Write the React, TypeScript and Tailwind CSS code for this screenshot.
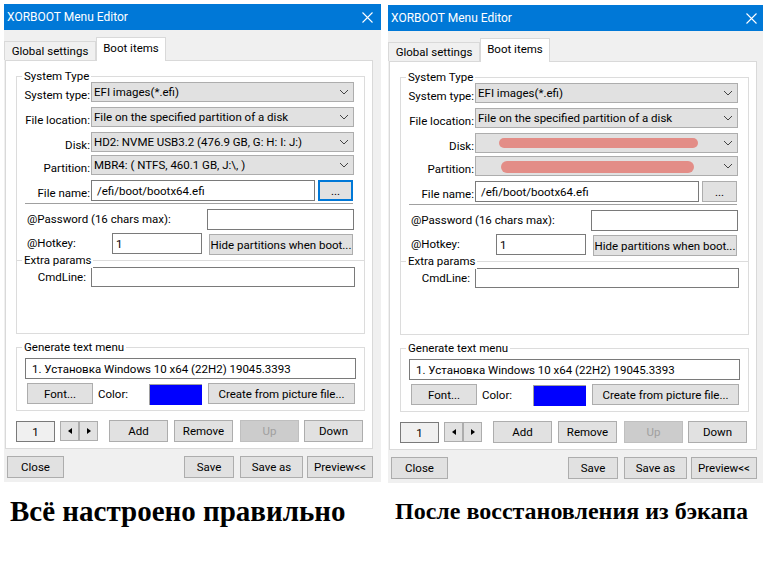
import { FC, ReactNode } from "react";

const ui = "font-['Roboto',sans-serif] text-[11.5px] leading-[16px] text-black whitespace-nowrap";

const Chevron: FC = () => (
  <svg width="10" height="6" viewBox="0 0 10 6" className="shrink-0">
    <polyline points="1,1 5,5 9,1" fill="none" stroke="#444" strokeWidth="1" />
  </svg>
);

const Btn: FC<{ w: string; h?: string; children: ReactNode; className?: string; disabled?: boolean }> = ({
  w,
  h = "h-[21px]",
  children,
  className = "",
  disabled,
}) => (
  <div
    className={`${w} ${h} ${className} flex shrink-0 items-center justify-center border ${
      disabled ? "border-[#bfbfbf] bg-[#cccccc] text-[#a0a0a0]" : "border-[#adadad] bg-[#e1e1e1]"
    }`}
  >
    {children}
  </div>
);

const Combo: FC<{ value?: string; pill?: string }> = ({ value, pill }) => (
  <div className="flex h-[20px] w-[263px] items-center border border-[#adadad] bg-[#e1e1e1] pl-[2px] pr-[4px]">
    <div className="flex-1 truncate">
      {value}
      {pill && <div className={pill} />}
    </div>
    <Chevron />
  </div>
);

const Label: FC<{ children: ReactNode }> = ({ children }) => (
  <div className="-mb-[1px] w-[74px] shrink-0 self-end pr-[1px] text-right">{children}</div>
);

const Group: FC<{ title: string; className: string; children?: ReactNode }> = ({ title, className, children }) => (
  <div className={`relative ml-[10px] w-[349px] border-[#dcdcdc] ${className}`}>
    <span className="absolute -top-[9px] left-[5px] bg-white px-[2px]">{title}</span>
    {children}
  </div>
);

const Window: FC<{ width: string; top: string; left: string; hidden?: boolean; focused?: boolean }> = ({
  width,
  top,
  left,
  hidden,
  focused,
}) => (
  <div className={`${width} ${top} ${left} shrink-0 ${ui}`}>
    <div className="flex h-[26px] items-center bg-[#0078d7] text-[12px] text-white">
      <span className="w-[358px] pl-[3px]">XORBOOT Menu Editor</span>
      <svg width="11" height="11" viewBox="0 0 11 11">
        <path d="M0.5 0.5 L10.5 10.5 M10.5 0.5 L0.5 10.5" stroke="#fff" strokeWidth="1.1" />
      </svg>
    </div>
    <div className="h-[452px] bg-[#f0f0f0] pt-[8px]">
      {/* tabs */}
      <div className="flex h-[22px] items-end">
        <div className="flex h-[19px] w-[92px] items-center justify-center border border-b-0 border-[#d9d9d9] bg-[#f0f0f0]">
          Global settings
        </div>
        <div className="relative z-10 -mb-px flex h-[24px] w-[70px] items-start justify-center border border-b-0 border-[#d9d9d9] bg-white pt-[2px]">
          Boot items
        </div>
      </div>
      {/* panel */}
      <div className="ml-[1px] flex h-[389px] w-[368px] flex-col border border-[#d9d9d9] bg-white">
        <Group title="System Type" className="mt-[15px] h-[184px] border-x border-t">
          <div className="mt-[5px] flex h-[20px]">
            <Label>System type:</Label>
            <Combo value="EFI images(*.efi)" />
          </div>
          <div className="mt-[5px] flex h-[20px]">
            <Label>File location:</Label>
            <Combo value="File on the specified partition of a disk" />
          </div>
          <div className="mt-[5px] flex h-[20px]">
            <Label>Disk:</Label>
            {hidden ? (
              <Combo pill="ml-[21px] h-[10px] w-[199px] rounded-full bg-[#e38d87]" />
            ) : (
              <Combo value="HD2: NVME USB3.2 (476.9 GB, G: H: I: J:)" />
            )}
          </div>
          <div className="mt-[3px] flex h-[20px]">
            <Label>Partition:</Label>
            {hidden ? (
              <Combo pill="ml-[23px] mt-[2px] h-[12px] w-[193px] rounded-full bg-[#e38d87]" />
            ) : (
              <Combo value="MBR4: ( NTFS, 460.1 GB, J:\, )" />
            )}
          </div>
          <div className="mt-[5px] flex h-[20px]">
            <Label>File name:</Label>
            <div className="flex h-[21px] w-[224px] items-center border border-[#7a7a7a] bg-white pl-[5px]">
              /efi/boot/bootx64.efi
            </div>
            <Btn
              w="w-[35px]"
              className={`ml-[3px] ${focused ? "border-2 !border-[#0078d7]" : ""}`}
            >
              ...
            </Btn>
          </div>
          <div className="ml-[8px] mt-[3px] w-[328px] border-t border-[#a0a0a0]" />
          <div className="mt-[5px] flex h-[20px] items-center">
            <span className="ml-[10px] w-[180px]">@Password (16 chars max):</span>
            <div className="h-[21px] w-[147px] border border-[#7a7a7a] bg-white" />
          </div>
          <div className="mt-[4px] flex h-[21px] items-start">
            <span className="ml-[10px] mt-[2px] w-[85px]">@Hotkey:</span>
            <div className="flex h-[21px] w-[90px] items-center border border-[#7a7a7a] bg-white pl-[3px]">1</div>
            <Btn w="w-[144px]" className="ml-[7px] mt-[1px]">
              Hide partitions when boot...
            </Btn>
          </div>
        </Group>
        <Group title="Extra params" className="h-[74px] border">
          <div className="mt-[6px] flex h-[20px]">
            <div className="w-[74px] shrink-0 self-center pr-[5px] text-right">CmdLine:</div>
            <div className="h-[20px] w-[264px] border border-[#7a7a7a] bg-white" />
          </div>
        </Group>
        <Group title="Generate text menu" className="mt-[13px] h-[64px] border">
          <div className="ml-[8px] mt-[10px] flex h-[21px] w-[331px] items-center border border-[#7a7a7a] bg-white pl-[6px]">
            1. Установка Windows 10 x64 (22H2) 19045.3393
          </div>
          <div className="mt-[4px] flex h-[21px] items-start">
            <Btn w="w-[66px]" className="ml-[10px]">
              Font...
            </Btn>
            <span className="ml-[5px] mt-[3px] w-[51px]">Color:</span>
            <div className="mt-[1px] h-[21px] w-[53px] border-l border-t border-[#a0a0a0] bg-[#0000ff]" />
            <Btn w="w-[147px]" className="ml-[6px]">
              Create from picture file...
            </Btn>
          </div>
        </Group>
        <div className="ml-[10px] mt-[10px] flex items-start">
          <div className="flex h-[21px] w-[39px] items-center justify-center border border-[#7a7a7a] bg-[#f0f0f0]">1</div>
          <Btn w="w-[19px]" h="h-[20px]" className="ml-[5px]">
            <svg width="4" height="6" viewBox="0 0 4 6">
              <polygon points="4,0 4,6 0,3" fill="#000" />
            </svg>
          </Btn>
          <Btn w="w-[19px]" h="h-[20px]">
            <svg width="4" height="6" viewBox="0 0 4 6">
              <polygon points="0,0 0,6 4,3" fill="#000" />
            </svg>
          </Btn>
          <Btn w="w-[59px]" h="h-[22px]" className="-mt-px ml-[11px]">
            Add
          </Btn>
          <Btn w="w-[59px]" h="h-[22px]" className="-mt-px ml-[6px]">
            Remove
          </Btn>
          <Btn w="w-[59px]" h="h-[22px]" className="-mt-px ml-[7px]" disabled>
            Up
          </Btn>
          <Btn w="w-[59px]" h="h-[22px]" className="-mt-px ml-[5px]">
            Down
          </Btn>
        </div>
      </div>
      {/* footer */}
      <div className="mt-[7px] flex">
        <Btn w="w-[57px]" h="h-[22px]" className="ml-[3px]">
          Close
        </Btn>
        <Btn w="w-[50px]" h="h-[22px]" className="ml-[120px]">
          Save
        </Btn>
        <Btn w="w-[63px]" h="h-[22px]" className="ml-[6px]">
          Save as
        </Btn>
        <Btn w="w-[66px]" h="h-[22px]" className="ml-[4px]">
          Preview&lt;&lt;
        </Btn>
      </div>
    </div>
  </div>
);

export default function App() {
  return (
    <div className="h-[561px] w-[768px] overflow-hidden bg-white">
      <div className="flex items-start">
        <Window width="w-[377px]" top="mt-[4px]" left="ml-[4px]" focused />
        <Window width="w-[375px]" top="mt-[5px]" left="ml-[7px]" hidden />
      </div>
      <div className="mt-[12px] flex items-center font-['Liberation_Serif',serif] font-bold text-black">
        <div className="ml-[10px] w-[378px] text-[29px] leading-[32px]">Всё настроено правильно</div>
        <div className="ml-[7px] text-[24px] leading-[32px]">После восстановления из бэкапа</div>
      </div>
    </div>
  );
}
